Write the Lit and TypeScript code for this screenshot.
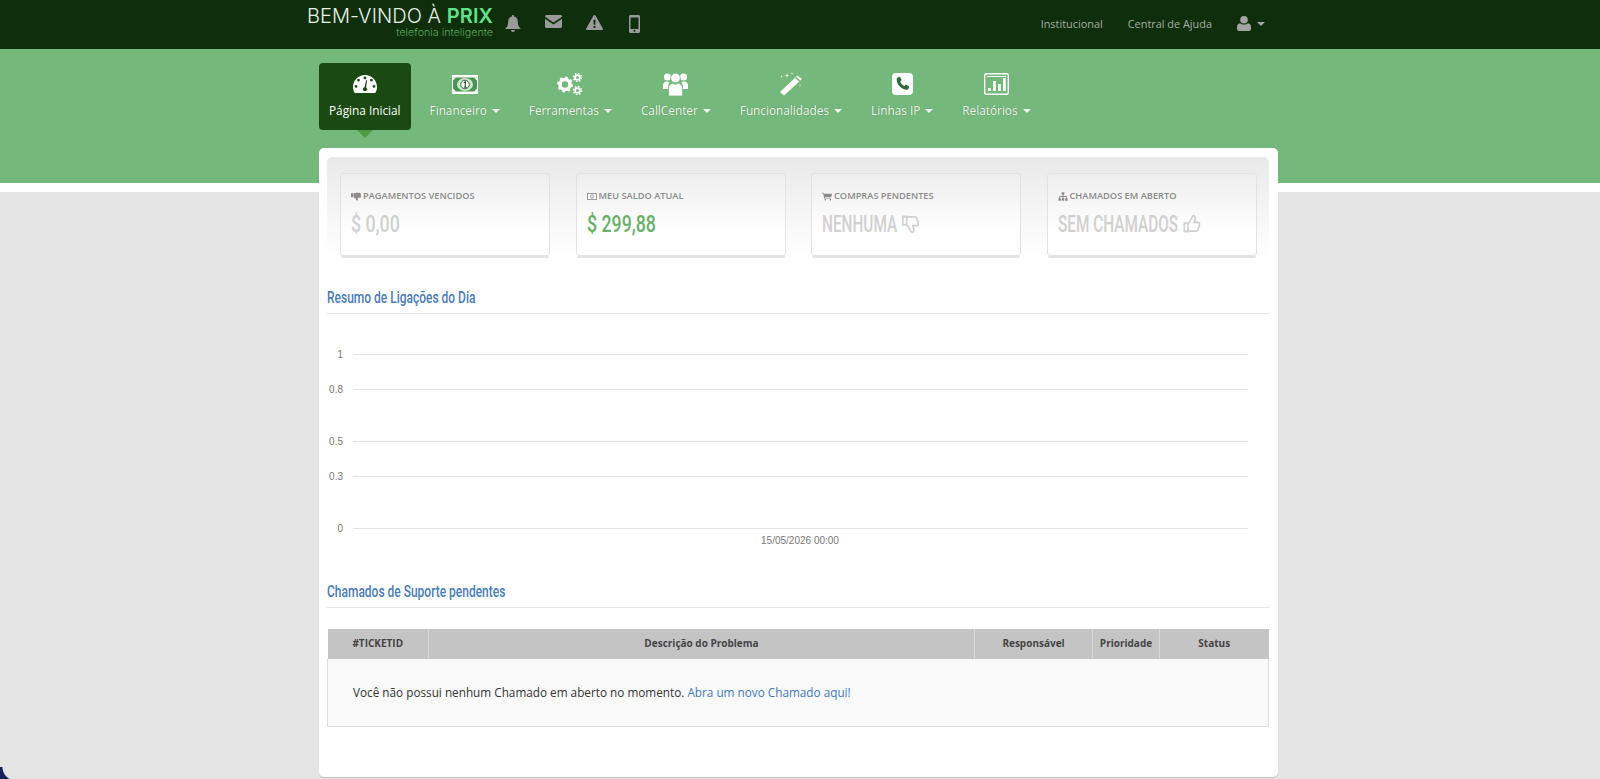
import { LitElement, css, html, svg } from "lit";
import { customElement } from "lit/decorators.js";

const icons = {
  gauge: html`<svg width="24" height="18" viewBox="0 0 24 18"><path fill="#fff" fill-rule="evenodd" d="M12 0C5.4 0 0 5.4 0 12c0 2.2.6 4.200 1.700 6h20.600c1.100-1.800 1.700-3.800 1.700-6 0-6.600-5.400-12-12-12zM5.500 3.800a1.400 1.400 0 1 1 0 2.800 1.400 1.400 0 0 1 0-2.800zM12 1.500a1.400 1.400 0 1 1 0 2.800 1.400 1.400 0 0 1 0-2.800zM18.500 3.800a1.400 1.400 0 1 1 0 2.800 1.400 1.400 0 0 1 0-2.800zM3 10a1.400 1.400 0 1 1 0 2.800A1.400 1.400 0 0 1 3 10zm18 0a1.400 1.400 0 1 1 0 2.800 1.400 1.400 0 0 1 0-2.800zM13.200 5l.9.300-1 7.200c.6.400 1 1 1 1.700 0 1.100-1 2-2.100 2s-2.100-.9-2.100-2c0-1 .7-1.800 1.600-2z"/></svg>`,
  money: html`<svg width="26" height="19" viewBox="0 0 26 19"><rect width="26" height="19" fill="#fff"/><rect x="1" y="2.500" width="24" height="14" fill="#4a9552"/><ellipse cx="13" cy="9.500" rx="8" ry="6.500" fill="#cfe6d0"/><circle cx="13" cy="9.500" r="4.300" fill="#fff" stroke="#2c6b33"/><path d="M11.800 7.800 13.300 6.800v5.400M11.800 12.200h3" fill="none" stroke="#1c4a22" stroke-width="1.100"/><path fill="#fff" d="M1 2.500h3L1 5.500zM25 2.500h-3l3 3zM1 16.500h3l-3-3zM25 16.500h-3l3-3z"/></svg>`,
  gears: html`<svg width="26" height="24" viewBox="0 0 26 24" fill="none" stroke="#fff"><circle cx="8" cy="12.500" r="5" stroke-width="3.500"/><circle cx="8" cy="12.500" r="7" stroke-width="2" stroke-dasharray="2.500 3"/><circle cx="20.500" cy="5.500" r="2.400" stroke-width="1.800"/><circle cx="20.500" cy="5.500" r="4" stroke-width="1.500" stroke-dasharray="1.500 1.640"/><circle cx="20.500" cy="18.500" r="2.400" stroke-width="1.800"/><circle cx="20.500" cy="18.500" r="4" stroke-width="1.500" stroke-dasharray="1.500 1.640"/></svg>`,
  users: html`<svg width="25" height="24" viewBox="0 0 25 24" fill="#fff"><circle cx="4.500" cy="5" r="3.600"/><circle cx="20.500" cy="5" r="3.600"/><path d="M0 17v-3.500C0 11 1.500 9.500 4 9.500c1 0 1.800.3 2.500.8-1 1.500-1.500 3.200-1.500 5V17zM25 17v-3.500c0-2.500-1.500-4-4-4-1 0-1.800.3-2.500.8 1 1.500 1.500 3.200 1.500 5V17z"/><circle cx="12.500" cy="6" r="4.800" stroke="#75b87b" stroke-width=".8"/><path stroke="#75b87b" stroke-width=".8" d="M5.500 24v-7.500c0-3.200 2-5 4.500-5.200.8.700 1.500 1 2.500 1s1.700-.3 2.500-1c2.500.2 4.500 2 4.500 5.200V24z"/></svg>`,
  wand: html`<svg width="24" height="24" viewBox="0 0 24 24" fill="#fff"><path d="M18.500 3.500 23 7 5 23.500 1 20z"/><path d="m16 6 4 3.400 1.200-1.100-4-3.400z" fill="#75b87b"/><path d="M8 1l.5 2 2 .5-2 .5L8 6l-.5-2-2-.5 2-.5zM13 0l.3 1.200 1.200.3-1.200.3-.3 1.200-.3-1.200-1.200-.3 1.200-.3zM2.500 3l.3 1.200L4 4.500l-1.200.3-.3 1.200-.3-1.200L1 4.500l1.200-.3zM21 12l.3 1 1 .3-1 .3-.3 1-.3-1-1-.3 1-.3z"/></svg>`,
  phone: html`<svg width="21" height="22" viewBox="0 0 21 22"><rect width="21" height="22" rx="4" fill="#fff"/><path fill="#2f6b38" d="M6 4.200 8 3.700l1.700 3.400-1.400 1.300c.6 2 2.200 3.700 4.200 4.500l1.400-1.300 3.300 1.900-.6 2c-.4 1-1.600 1.500-2.700 1.300C9 15.900 5.200 11.800 4.700 7c-.1-1.300.3-2.300 1.300-2.800z"/></svg>`,
  chart: html`<svg width="25" height="22" viewBox="0 0 25 22"><rect x=".7" y=".7" width="23.600" height="20.600" rx="1.500" fill="none" stroke="#fff" stroke-width="1.400"/><path fill="#fff" d="M4 15h2.800v3H4zM9 8h2.800v10H9zM14 11h2.800v7H14zM19 5h2.800v13H19z"/><path stroke="#fff" stroke-width="1" d="M3 3.500h19"/></svg>`,
};

const thumb = "M2 11h5v10H2zM7 11c2-1 4-4 5-6 .5-1.500 1-3 2.500-3s2.500 2 2 4l-1 4h5c1.500 0 2.500 1.200 2 2.500l-2 6.500c-.3 1-1 1.500-2 1.500H10c-1 0-2-.5-3-1";

const thumbsUp = html`<svg class="hand" viewBox="0 0 24 24" preserveAspectRatio="none" fill="none" stroke="currentColor" stroke-width="2.200"><path d=${thumb}/></svg>`;
const thumbsDown = html`<svg class="hand" viewBox="0 0 24 24" preserveAspectRatio="none" fill="none" stroke="currentColor" stroke-width="2.200"><g transform="matrix(1 0 0 -1 0 24)"><path d=${thumb}/></g></svg>`;

const mini = {
  down: html`<svg class="mini" viewBox="0 0 12 10" fill="currentColor"><path d="M0 1h2.500v5H0zM3 1.200C4 .8 5 .5 6.500.5H10c1 0 1.500.5 1.700 1.500l.3 3c0 1-.5 1.500-1.500 1.500H8l.3 2c0 1-.5 1.500-1.200 1.500-.5 0-.7-.5-1-1.300C5.700 7.500 4.500 6.500 3 6z"/></svg>`,
  bill: html`<svg class="mini" viewBox="0 0 12 10" fill="none" stroke="currentColor"><rect x=".5" y="1.500" width="11" height="7"/><circle cx="6" cy="5" r="1.800"/></svg>`,
  cart: html`<svg class="mini" viewBox="0 0 12 10" fill="currentColor"><path d="M0 .5h2l.4 1.200H12l-1 4.300H3.300l.2 1h7.300v.8H2.800L1.400 1.300H0z"/><circle cx="4" cy="9" r="1"/><circle cx="10" cy="9" r="1"/></svg>`,
  tree: html`<svg class="mini" viewBox="0 0 12 10" fill="currentColor"><path d="M4.500 0h3v3h-1v1.500H10.500V7h1v3h-3V7h1V5.500H6.500V7h1v3h-3V7h1V5.500H2.500V7h1v3h-3V7h1V4.500h4V3h-1z"/></svg>`,
};

const nav = [
  { label: "Página Inicial", icon: icons.gauge, active: true },
  { label: "Financeiro", icon: icons.money },
  { label: "Ferramentas", icon: icons.gears },
  { label: "CallCenter", icon: icons.users },
  { label: "Funcionalidades", icon: icons.wand },
  { label: "Linhas IP", icon: icons.phone },
  { label: "Relatórios", icon: icons.chart },
];

const stats = [
  { label: "Pagamentos vencidos", icon: mini.down, value: "$ 0,00" },
  { label: "Meu saldo atual", icon: mini.bill, value: "$ 299,88", good: true },
  { label: "Compras pendentes", icon: mini.cart, value: "NENHUMA", hand: thumbsDown },
  { label: "Chamados em aberto", icon: mini.tree, value: "SEM CHAMADOS", hand: thumbsUp },
];

const ticks = [
  { label: "1", y: 40 },
  { label: "0.8", y: 75 },
  { label: "0.5", y: 127 },
  { label: "0.3", y: 162 },
  { label: "0", y: 214 },
];

@customElement("app-root")
export class AppRoot extends LitElement {
  static styles = css`
    :host {
      display: block;
      min-height: 779px;
      background: #e4e4e4;
      font-family: "Open Sans", "Liberation Sans", sans-serif;
      color: #333;
    }
    .top {
      height: 49px;
      box-sizing: border-box;
      padding: 0 335px 2px 307px;
      background: #0f2f0c;
      display: flex;
      align-items: center;
    }
    .logo {
      width: 186px;
      align-self: flex-start;
      display: flex;
      flex-direction: column;
      align-items: flex-end;
      font-family: Inter, sans-serif;
      white-space: nowrap;
    }
    .logo-main {
      margin-top: 4px;
      font-size: 20px;
      line-height: 24px;
      font-weight: 300;
      letter-spacing: 0.07px;
      color: #e8f0e6;
    }
    .logo-main b {
      font-weight: 600;
      color: #62e08a;
    }
    .logo-sub {
      font-size: 10.7px;
      line-height: 14px;
      margin-top: -2px;
      font-weight: 300;
      color: #5ca85c;
    }
    .alerts {
      display: flex;
    }
    .alert {
      width: 40.5px;
      display: flex;
      justify-content: center;
      color: #9a9a9a;
    }
    .alert svg {
      display: block;
      fill: currentColor;
    }
    .top-links {
      margin-left: auto;
      display: flex;
      align-items: center;
      gap: 25px;
      font-size: 10.9px;
      color: #a4aea2;
    }
    .user {
      display: flex;
      align-items: center;
      gap: 6px;
      color: #a4a4a4;
    }
    .caret {
      display: inline-block;
      border: 4px solid transparent;
      border-top-color: currentColor;
      border-bottom: 0;
    }
    .band {
      height: 134px;
      background: #75b87b;
      border-bottom: 9px solid #fff;
    }
    .nav {
      display: flex;
      gap: 9px;
      margin-left: 319px;
      padding-top: 14px;
    }
    .nav-item {
      position: relative;
      height: 67px;
      box-sizing: border-box;
      padding: 9px 10px 0;
      border-radius: 4px;
      display: flex;
      flex-direction: column;
      align-items: center;
      color: #f2f7f2;
      font-size: 11.8px;
      line-height: 18px;
      white-space: nowrap;
      text-shadow: 0 0 1px rgba(40, 80, 40, 0.5);
    }
    .nav-item.active {
      background: #1a4a11;
      color: #fff;
      text-shadow: none;
    }
    .nav-item.active::after {
      content: "";
      position: absolute;
      left: 50%;
      top: 100%;
      margin-left: -8px;
      border: 8px solid transparent;
      border-top-color: #4d9a45;
      border-bottom: 0;
    }
    .nav-icon {
      height: 24px;
      margin-bottom: 5px;
      display: flex;
      align-items: center;
      justify-content: center;
    }
    .nav-icon svg {
      display: block;
    }
    .nav-label .caret {
      margin-left: 5px;
      vertical-align: 2px;
    }
    .card {
      position: relative;
      width: 959px;
      height: 629px;
      box-sizing: border-box;
      margin-left: 319px;
      margin-top: -44px;
      padding: 9px 9px 0 8px;
      background: #fff;
      border-radius: 5px;
      box-shadow: 0 1px 1px rgba(0, 0, 0, 0.15);
    }
    .stats {
      display: grid;
      grid-template-columns: repeat(4, 210px);
      column-gap: 25.5px;
      height: 114px;
      padding: 16px 0 0 13px;
      box-sizing: border-box;
      border-radius: 5px;
      background: linear-gradient(#e9e9e9, #fff 88%);
    }
    .stat {
      height: 83px;
      box-sizing: border-box;
      padding: 15px 10px 0;
      border-radius: 3px;
      border: 1px solid #e2e2e2;
      background: linear-gradient(#eeeeee, #fff 72%);
      box-shadow: 0 3px 0 -1px #e3e3e3;
    }
    .stat-label {
      display: flex;
      align-items: center;
      gap: 2px;
      font-size: 9.25px;
      line-height: 14px;
      font-weight: 600;
      text-transform: uppercase;
      color: #8a8a8a;
    }
    .mini {
      width: 10px;
      height: 9px;
      flex: none;
    }
    .stat-value {
      display: flex;
      align-items: center;
      gap: 7px;
      margin-top: 6px;
      height: 30px;
      font-family: Roboto, sans-serif;
      font-size: 24px;
      font-weight: 500;
      white-space: nowrap;
      color: #d0d0d0;
      transform: scaleX(0.74);
      transform-origin: left;
    }
    .stat-value.good {
      color: #6ab06a;
    }
    .stat-value.caps {
      transform: scaleX(0.64);
    }
    .hand {
      width: 28px;
      height: 20px;
      flex: none;
    }
    .title {
      height: 30px;
      border-bottom: 1px solid #e6e6e6;
      margin: 0;
      font-family: Roboto, sans-serif;
      font-size: 17px;
      font-weight: 500;
      line-height: 28px;
      color: #4a7cb5;
      white-space: nowrap;
    }
    .title span {
      display: inline-block;
      transform: scaleX(0.705);
      transform-origin: left;
    }
    .stats + .title {
      margin-top: 12px;
    }
    .chart {
      display: block;
      height: 263px;
    }
    .chart line {
      stroke: #e2e2e2;
    }
    .chart text {
      font-family: "Liberation Sans", sans-serif;
      font-size: 10px;
      fill: #777;
    }
    table {
      width: 942px;
      margin: 21px 0 0;
      border-collapse: collapse;
      table-layout: fixed;
    }
    th {
      height: 30px;
      padding: 0 0 2px;
      box-sizing: border-box;
      background: #c4c4c4;
      border-left: 1px solid #d8d8d8;
      color: #444;
      font-size: 10px;
      font-weight: 700;
      text-align: center;
    }
    th:first-child {
      border-left: 0;
    }
    td {
      height: 67px;
      padding: 0 25px 1px;
      box-sizing: border-box;
      background: #f9f9f9;
      border: 1px solid #ddd;
      border-top: 0;
      font-size: 11.75px;
      color: #333;
    }
    a {
      color: #3f7ab8;
      text-decoration: none;
    }
    .corner {
      position: fixed;
      left: 0;
      bottom: 0;
      width: 16px;
      height: 12px;
      background: radial-gradient(circle at 100% 0, transparent 13px, #14235e 14px);
    }
  `;

  render() {
    return html`
      <div class="top">
        <div class="logo">
          <div class="logo-main">BEM-VINDO À <b>PRIX</b></div>
          <div class="logo-sub">telefonia inteligente</div>
        </div>
        <div class="alerts">
          <div class="alert"><svg width="16" height="17" viewBox="0 0 16 17"><path d="M8 0c.6 0 1 .4 1 1v.6c2.400.5 3.800 2.400 3.800 4.800 0 3.600.8 5.400 3.200 7.600H0c2.400-2.200 3.200-4 3.200-7.600C3.200 4 4.600 2.100 7 1.600V1c0-.6.4-1 1-1zM6 15h4c0 1.100-.9 2-2 2s-2-.9-2-2z"/></svg></div>
          <div class="alert"><svg width="17" height="13" viewBox="0 0 17 13"><path d="M1.500 0h14c.8 0 1.500.7 1.500 1.500v.3L8.500 7.500 0 1.800v-.3C0 .7.700 0 1.500 0zM0 3.800l8.500 5.700L17 3.800v7.700c0 .8-.7 1.500-1.500 1.500h-14C.7 13 0 12.300 0 11.500z"/></svg></div>
          <div class="alert"><svg width="17" height="15" viewBox="0 0 17 15"><path fill-rule="evenodd" d="M8.500 0c.4 0 .8.200 1 .6l7.300 12.800c.4.700-.1 1.600-1 1.600H1.200c-.9 0-1.400-.9-1-1.600L7.500.6c.2-.4.600-.6 1-.6zM7.400 4.800l.3 5h1.600l.3-5zM7.500 11v2h2v-2z"/></svg></div>
          <div class="alert"><svg width="11" height="18" viewBox="0 0 11 18"><path fill-rule="evenodd" d="M1.500 0h8C10.300 0 11 .7 11 1.500v15c0 .8-.7 1.500-1.500 1.500h-8C.7 18 0 17.300 0 16.500v-15C0 .7.700 0 1.500 0zM1.500 2.500v11.500h8V2.500zM5.500 14.800a1 1 0 1 0 0 2 1 1 0 0 0 0-2z"/></svg></div>
        </div>
        <div class="top-links">
          <span>Institucional</span>
          <span>Central de Ajuda</span>
          <span class="user">
            <svg width="14" height="15" viewBox="0 0 14 15" fill="currentColor"><circle cx="7" cy="3.800" r="3.800"/><path d="M3 7.200c1 .9 2.500 1.400 4 1.400s3-.5 4-1.400c2 .3 3 1.800 3 4.300v1.500c0 1.100-.9 2-2 2H2c-1.100 0-2-.9-2-2v-1.500c0-2.500 1-4 3-4.300z"/></svg>
            <i class="caret"></i>
          </span>
        </div>
      </div>

      <div class="band">
        <div class="nav">
          ${nav.map(
            (item) => html`
              <div class="nav-item ${item.active ? "active" : ""}">
                <div class="nav-icon">${item.icon}</div>
                <div class="nav-label">
                  ${item.label}${item.active ? "" : html`<i class="caret"></i>`}
                </div>
              </div>
            `,
          )}
        </div>
      </div>

      <div class="card">
        <div class="stats">
          ${stats.map(
            (s) => html`
              <div class="stat">
                <div class="stat-label">${s.icon}${s.label}</div>
                <div class="stat-value ${s.good ? "good" : ""} ${s.hand ? "caps" : ""}">
                  ${s.value}${s.hand ?? ""}
                </div>
              </div>
            `,
          )}
        </div>

        <h3 class="title"><span>Resumo de Ligações do Dia</span></h3>
        <svg class="chart" width="942" height="263" viewBox="0 0 942 263">
          ${ticks.map(
            (t) => svg`
              <line x1="26" x2="921" y1=${t.y + 0.5} y2=${t.y + 0.5}></line>
              <text x="16" y=${t.y + 4} text-anchor="end">${t.label}</text>
            `,
          )}
          <text x="473" y="230" text-anchor="middle">15/05/2026 00:00</text>
        </svg>

        <h3 class="title"><span>Chamados de Suporte pendentes</span></h3>
        <table>
          <colgroup>
            <col style="width: 101px" />
            <col style="width: 546px" />
            <col style="width: 118px" />
            <col style="width: 67px" />
            <col />
          </colgroup>
          <thead>
            <tr>
              <th>#TICKETID</th>
              <th>Descrição do Problema</th>
              <th>Responsável</th>
              <th>Prioridade</th>
              <th>Status</th>
            </tr>
          </thead>
          <tbody>
            <tr>
              <td colspan="5">
                Você não possui nenhum Chamado em aberto no momento.
                <a href="#">Abra um novo Chamado aqui!</a>
              </td>
            </tr>
          </tbody>
        </table>
      </div>
      <div class="corner"></div>
    `;
  }
}
